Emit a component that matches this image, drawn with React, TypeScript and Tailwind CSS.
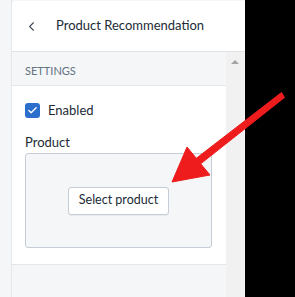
import React from "react";
import { ChevronLeft, Check } from "lucide-react";

function Arrow() {
  return (
    <svg
      className="pointer-events-none absolute left-0 top-0"
      width="295"
      height="297"
      viewBox="0 0 295 297"
    >
      <polygon
        points="281.5,92.5 196.3,158.3 187,147 172,182 210,175 200.7,163.8 284.5,97.5"
        fill="#ee1c1c"
        stroke="#ee1c1c"
        strokeWidth="1"
        strokeLinejoin="round"
      />
    </svg>
  );
}

export default function App() {
  return (
    <div
      className="relative flex h-[297px] w-[295px] overflow-hidden bg-black text-[#212b36]"
      style={{ fontFamily: 'Lato, "Open Sans", sans-serif' }}
    >
      <div className="flex h-full w-[245px] bg-[#f4f6f8]">
        <div className="w-[12px] shrink-0 border-r border-[#e3e6ea]" />
        <div className="flex flex-1 flex-col">
          <div className="mt-[1px] flex h-[51px] shrink-0 items-center rounded-tl-[4px] border-b border-[#dfe3e8] bg-white">
            <ChevronLeft size={15} strokeWidth={1.75} className="ml-[12px] text-[#454f5b]" />
            <span className="ml-[17px] text-[13px]">Product Recommendation</span>
          </div>
          <div className="flex flex-1">
            <div className="flex w-[214px] flex-col">
              <div className="flex h-[33px] items-end pb-[6px] pl-[13px] text-[11px] text-[#637381]">
                SETTINGS
              </div>
              <div className="flex flex-col border-y border-[#e3e6ea] bg-white pb-[16px] pl-[13px] pr-[14px] pt-[15px]">
                <label className="flex items-center">
                  <span className="flex h-[15px] w-[15px] items-center justify-center rounded-[3px] bg-[#2c6ecb]">
                    <Check size={11} strokeWidth={3} className="text-white" />
                  </span>
                  <span className="ml-[8px] text-[13px]">Enabled</span>
                </label>
                <div className="mt-[12px] text-[13px]">Product</div>
                <div className="mt-[1px] flex h-[95px] items-center justify-center rounded-[3px] border border-[#c4cdd5] bg-[#f4f6f8]">
                  <button className="h-[28px] w-[101px] rounded-[3px] border border-[#c4cdd5] bg-white text-[12.5px] shadow-[0_1px_0_rgba(22,29,37,0.05)]">
                    Select product
                  </button>
                </div>
              </div>
            </div>
            <div className="relative w-[18px] bg-[#f1f1f1]">
              <div className="absolute left-[5px] top-[8px] h-0 w-0 border-x-[4px] border-b-[4px] border-x-transparent border-b-[#a3a3a3]" />
            </div>
          </div>
        </div>
      </div>
      <Arrow />
    </div>
  );
}
